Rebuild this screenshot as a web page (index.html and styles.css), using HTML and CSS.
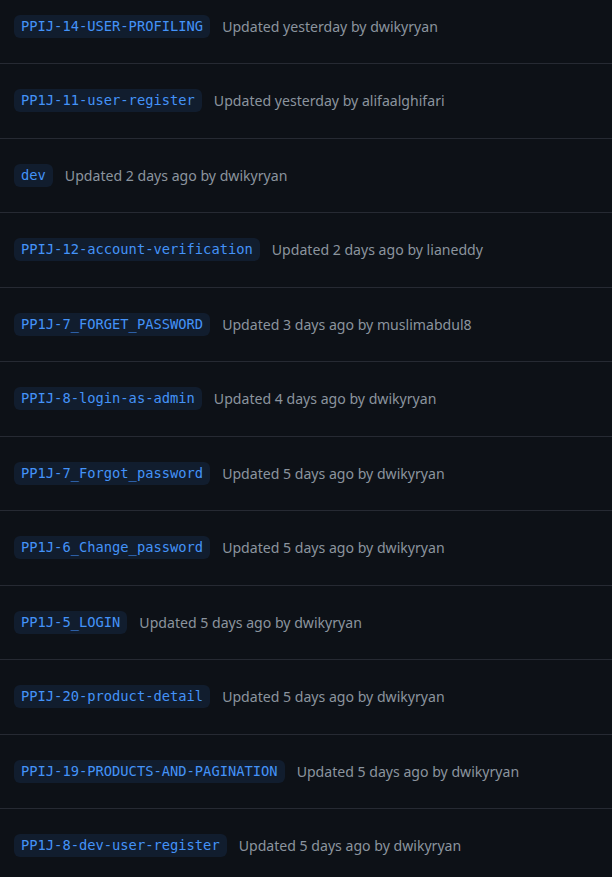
FILE: index.html
```html
<!DOCTYPE html>
<html>
<head>
<meta charset="utf-8">
<link rel="stylesheet" href="styles.css">
</head>
<body>
<ul class="branches">
  <li class="row"><span class="branch">PPIJ-14-USER-PROFILING</span><span class="meta">Updated yesterday by dwikyryan</span></li>
  <li class="row"><span class="branch">PP1J-11-user-register</span><span class="meta">Updated yesterday by alifaalghifari</span></li>
  <li class="row"><span class="branch">dev</span><span class="meta">Updated 2 days ago by dwikyryan</span></li>
  <li class="row"><span class="branch">PPIJ-12-account-verification</span><span class="meta">Updated 2 days ago by lianeddy</span></li>
  <li class="row"><span class="branch">PP1J-7_FORGET_PASSWORD</span><span class="meta">Updated 3 days ago by muslimabdul8</span></li>
  <li class="row"><span class="branch">PPIJ-8-login-as-admin</span><span class="meta">Updated 4 days ago by dwikyryan</span></li>
  <li class="row"><span class="branch">PP1J-7_Forgot_password</span><span class="meta">Updated 5 days ago by dwikyryan</span></li>
  <li class="row"><span class="branch">PP1J-6_Change_password</span><span class="meta">Updated 5 days ago by dwikyryan</span></li>
  <li class="row"><span class="branch">PP1J-5_LOGIN</span><span class="meta">Updated 5 days ago by dwikyryan</span></li>
  <li class="row"><span class="branch">PPIJ-20-product-detail</span><span class="meta">Updated 5 days ago by dwikyryan</span></li>
  <li class="row"><span class="branch">PPIJ-19-PRODUCTS-AND-PAGINATION</span><span class="meta">Updated 5 days ago by dwikyryan</span></li>
  <li class="row"><span class="branch">PP1J-8-dev-user-register</span><span class="meta">Updated 5 days ago by dwikyryan</span></li>
</ul>
</body>
</html>
```
FILE: styles.css
```css
html, body {
  margin: 0;
  padding: 0;
  background: #0d1117;
  overflow: hidden;
}
.branches {
  list-style: none;
  margin: -10.5px 0 0 0;
  padding: 0;
}
.row {
  display: flex;
  align-items: center;
  gap: 12px;
  height: 73.5px;
  padding: 0 14px;
  border-bottom: 1px solid #262a33;
}
.branch {
  display: inline-block;
  height: 23px;
  line-height: 23px;
  padding: 0 7px;
  border-radius: 6px;
  background: #111d2e;
  color: #4493f8;
  font-family: "DejaVu Sans Mono", "Liberation Mono", monospace;
  font-size: 13.75px;
  white-space: nowrap;
}
.meta {
  color: #8b949e;
  font-family: "Noto Sans", "Liberation Sans", sans-serif;
  font-size: 14.1px;
  white-space: nowrap;
}
```
